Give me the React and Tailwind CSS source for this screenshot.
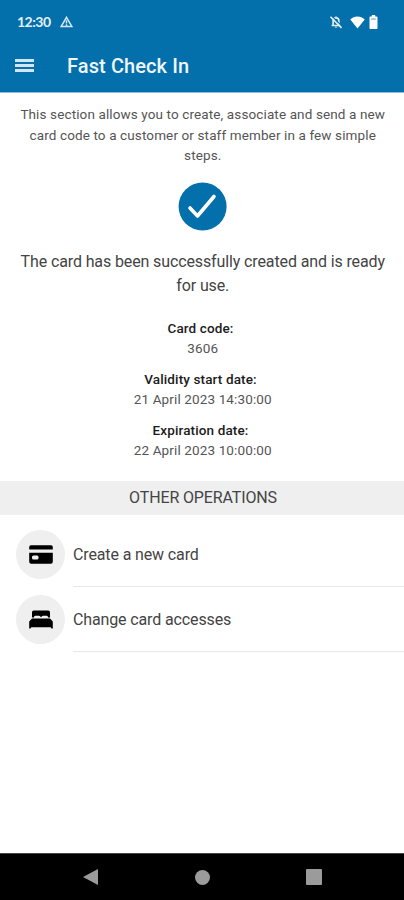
import React from "react";

const details = [
  { label: "Card code:", value: "3606" },
  { label: "Validity start date:", value: "21 April 2023 14:30:00" },
  { label: "Expiration date:", value: "22 April 2023 10:00:00" },
];

function StatusBar() {
  return (
    <div className="flex h-[44px] items-center justify-between pl-[17px] pr-[26px]">
      <div className="flex items-center">
        <span className="w-[43px] font-[Lato,sans-serif] text-[14px] font-bold leading-none tracking-[-0.5px] text-[#e3f0f8]">12:30</span>
        <svg className="h-[12px] w-[13px]" viewBox="0 0 13 12" fill="none" stroke="#d5e8f4" strokeWidth="1.5">
          <path d="M6.500 1.300 11.800 10.400H1.200z" />
          <path d="M6.500 4.200v3.300M6.500 8.200v1.800" />
        </svg>
      </div>
      <div className="flex items-center">
        <svg className="mr-[7px] h-[14px] w-[14px]" viewBox="0 0 24 24" fill="none" stroke="#e3f0f8" strokeWidth="2.800">
          <path d="M4.500 18h15M7 17v-6.500C7 7.500 9 5 12 5s5 2.500 5 5.500V17M12 2.500V5" />
          <path d="M10 20h4v1.500h-4z" fill="#e3f0f8" stroke="none" />
          <path d="M4.500 1.500 23 20" stroke="#036fab" strokeWidth="2" />
          <path d="M2.500 3 21.500 22" />
        </svg>
        <svg className="mr-[4px] h-[13px] w-[15px]" viewBox="0 0 15 13" fill="#fff">
          <path d="M7.5 12.6.3 3.5C2.3 1.6 4.8.6 7.5.6s5.200 1 7.200 2.900z" />
        </svg>
        <svg className="h-[14px] w-[9px]" viewBox="0 0 9 14" fill="#fff">
          <path d="M2.800 0h3.400v1.500h1.300c.6 0 1 .4 1 1V13c0 .6-.4 1-1 1h-6c-.6 0-1-.4-1-1V2.500c0-.6.4-1 1-1h1.300z" />
          <path d="M2.300 3.500h4.400v1.100H2.300z" fill="#5b9ec8" />
        </svg>
      </div>
    </div>
  );
}

function CardIcon() {
  return (
    <svg className="h-[20px] w-[24px]" viewBox="0 0 24 20">
      <path d="M2 1.300h20a1.800 1.800 0 0 1 1.800 1.800v2.400H.2V3.100A1.800 1.800 0 0 1 2 1.300zM.2 8.800h23.600v9a2 2 0 0 1-2 2H2.200a2 2 0 0 1-2-2z" />
      <rect x="3" y="11.500" width="6.500" height="4" rx="1.500" fill="#efefef" />
    </svg>
  );
}

function BedIcon() {
  return (
    <svg className="h-[19px] w-[24px]" viewBox="0 0 24 19">
      <path d="M3 7.500V2.300A1.800 1.800 0 0 1 4.800.5h14.400A1.800 1.800 0 0 1 21 2.300v5.200h-2c0-1-.5-1.700-1.300-1.700h-3.500c-.8 0-1.300.4-1.500 1h-1.400c-.2-.6-.7-1-1.500-1H6.300C5.500 5.800 5 6.500 5 7.500zM3 8.500h18l2.800 3v7h-1.300l-.8-1.200H2.300l-.8 1.200H.2v-7z" />
    </svg>
  );
}

function Operation({ icon, label }) {
  return (
    <div className="flex h-[65px] pl-4">
      <div className="mt-[8px] flex h-[49px] w-[49px] items-center justify-center rounded-full bg-[#efefef]">
        {icon}
      </div>
      <div className="ml-[8px] flex flex-1 items-center border-b border-[#e8e8e8] pt-[2px]">
        <span className="text-[16px] tracking-[-0.13px] text-[#444]">{label}</span>
      </div>
    </div>
  );
}

export default function App() {
  return (
    <div className="flex h-[900px] w-[404px] flex-col overflow-hidden bg-white font-[Roboto,sans-serif]">
      <header className="h-[93px] border-b border-[#8fbad8] bg-[#036fab]">
        <StatusBar />
        <div className="flex h-[43px] items-center pl-[15px]">
          <div className="flex w-[19px] flex-col gap-[2px]">
            <div className="h-[3px] bg-[#d3e5f1]" />
            <div className="h-[3px] bg-[#d3e5f1]" />
            <div className="h-[3px] bg-[#d3e5f1]" />
          </div>
          <h1 className="ml-[33px] text-[20px] font-medium leading-none tracking-[0.1px] text-[#eef6fb]">Fast Check In</h1>
        </div>
      </header>

      <main className="flex flex-1 flex-col">
        <div className="flex flex-col items-center pl-[1.500px]">
          <p className="mt-[11px] whitespace-nowrap text-center text-[13.500px] leading-[20.500px] tracking-[0.12px] text-[#555]">
            This section allows you to create, associate and send a new
            <br />
            card code to a customer or staff member in a few simple
            <br />
            steps.
          </p>
          <svg className="mt-[16px] h-[49px] w-[49px]" viewBox="0 0 49 49" fill="none">
            <circle cx="24.600" cy="24.500" r="24" fill="#036fab" />
            <path d="m12 26 7.500 8L36 14.500" stroke="#fff" strokeWidth="3.600" strokeLinecap="round" strokeLinejoin="round" />
          </svg>
          <p className="mt-[19px] whitespace-nowrap text-center text-[16px] leading-[24px] tracking-[-0.12px] text-[#444]">
            The card has been successfully created and is ready
            <br />
            for use.
          </p>
          <dl className="mt-[20px] flex flex-col gap-[10px] text-center text-[13.500px] leading-[20.500px] tracking-[0.13px]">
            {details.map((item) => (
              <div key={item.label}>
                <dt className="pr-[4.500px] font-medium text-[#1c1c1c]">{item.label}</dt>
                <dd className="text-[#555]">{item.value}</dd>
              </div>
            ))}
          </dl>
        </div>

        <h2 className="mt-[20px] flex h-[34px] items-center justify-center bg-[#efefef] pl-[2px] text-[16px] tracking-[-0.13px] text-[#444]">
          OTHER OPERATIONS
        </h2>
        <div className="mt-[7px]">
          <Operation icon={<CardIcon />} label="Create a new card" />
          <Operation icon={<BedIcon />} label="Change card accesses" />
        </div>
      </main>

      <footer className="flex h-[47px] items-center border-t border-[#444] bg-black">
        <svg className="ml-[83px] h-[16px] w-[15px]" viewBox="0 0 15 16" fill="#9b9b9b">
          <path d="M0 8 15 0v16z" />
        </svg>
        <div className="ml-[97px] h-[15px] w-[15px] rounded-full bg-[#9b9b9b]" />
        <div className="ml-[96px] h-[16px] w-[16px] rounded-[1px] bg-[#9b9b9b]" />
      </footer>
    </div>
  );
}
